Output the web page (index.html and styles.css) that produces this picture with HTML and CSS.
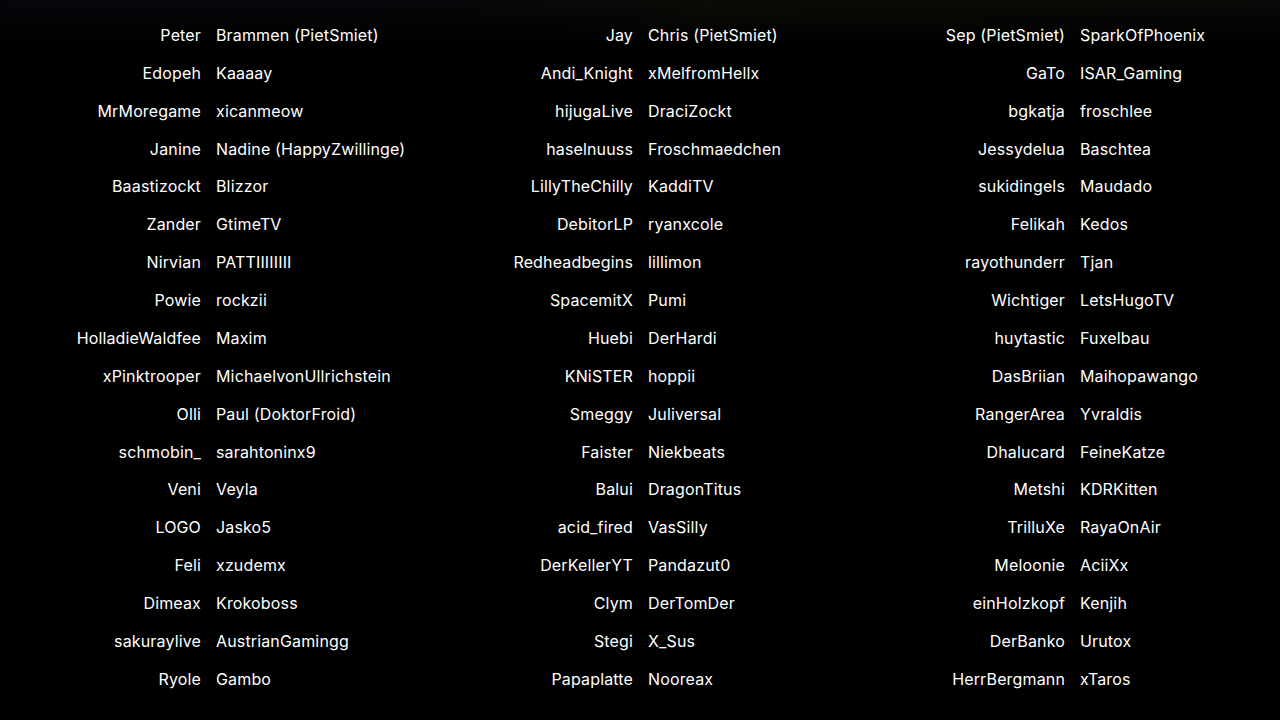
FILE: index.html
```html
<!DOCTYPE html>
<html lang="de">
<head>
<meta charset="utf-8">
<title>Teilnehmer</title>
<link rel="stylesheet" href="styles.css">
</head>
<body>
<main class="credits">
  <div class="group">
    <span class="a">Peter</span><span class="b">Brammen (PietSmiet)</span>
    <span class="a">Edopeh</span><span class="b">Kaaaay</span>
    <span class="a">MrMoregame</span><span class="b">xicanmeow</span>
    <span class="a">Janine</span><span class="b">Nadine (HappyZwillinge)</span>
    <span class="a">Baastizockt</span><span class="b">Blizzor</span>
    <span class="a">Zander</span><span class="b">GtimeTV</span>
    <span class="a">Nirvian</span><span class="b">PATTIIIIIIII</span>
    <span class="a">Powie</span><span class="b">rockzii</span>
    <span class="a">HolladieWaldfee</span><span class="b">Maxim</span>
    <span class="a">xPinktrooper</span><span class="b">MichaelvonUllrichstein</span>
    <span class="a">Olli</span><span class="b">Paul (DoktorFroid)</span>
    <span class="a">schmobin_</span><span class="b">sarahtoninx9</span>
    <span class="a">Veni</span><span class="b">Veyla</span>
    <span class="a">LOGO</span><span class="b">Jasko5</span>
    <span class="a">Feli</span><span class="b">xzudemx</span>
    <span class="a">Dimeax</span><span class="b">Krokoboss</span>
    <span class="a">sakuraylive</span><span class="b">AustrianGamingg</span>
    <span class="a">Ryole</span><span class="b">Gambo</span>
  </div>
  <div class="group">
    <span class="a">Jay</span><span class="b">Chris (PietSmiet)</span>
    <span class="a">Andi_Knight</span><span class="b">xMelfromHellx</span>
    <span class="a">hijugaLive</span><span class="b">DraciZockt</span>
    <span class="a">haselnuuss</span><span class="b">Froschmaedchen</span>
    <span class="a">LillyTheChilly</span><span class="b">KaddiTV</span>
    <span class="a">DebitorLP</span><span class="b">ryanxcole</span>
    <span class="a">Redheadbegins</span><span class="b">lillimon</span>
    <span class="a">SpacemitX</span><span class="b">Pumi</span>
    <span class="a">Huebi</span><span class="b">DerHardi</span>
    <span class="a">KNiSTER</span><span class="b">hoppii</span>
    <span class="a">Smeggy</span><span class="b">Juliversal</span>
    <span class="a">Faister</span><span class="b">Niekbeats</span>
    <span class="a">Balui</span><span class="b">DragonTitus</span>
    <span class="a">acid_fired</span><span class="b">VasSilly</span>
    <span class="a">DerKellerYT</span><span class="b">Pandazut0</span>
    <span class="a">Clym</span><span class="b">DerTomDer</span>
    <span class="a">Stegi</span><span class="b">X_Sus</span>
    <span class="a">Papaplatte</span><span class="b">Nooreax</span>
  </div>
  <div class="group">
    <span class="a">Sep (PietSmiet)</span><span class="b">SparkOfPhoenix</span>
    <span class="a">GaTo</span><span class="b">ISAR_Gaming</span>
    <span class="a">bgkatja</span><span class="b">froschlee</span>
    <span class="a">Jessydelua</span><span class="b">Baschtea</span>
    <span class="a">sukidingels</span><span class="b">Maudado</span>
    <span class="a">Felikah</span><span class="b">Kedos</span>
    <span class="a">rayothunderr</span><span class="b">Tjan</span>
    <span class="a">Wichtiger</span><span class="b">LetsHugoTV</span>
    <span class="a">huytastic</span><span class="b">Fuxelbau</span>
    <span class="a">DasBriian</span><span class="b">Maihopawango</span>
    <span class="a">RangerArea</span><span class="b">Yvraldis</span>
    <span class="a">Dhalucard</span><span class="b">FeineKatze</span>
    <span class="a">Metshi</span><span class="b">KDRKitten</span>
    <span class="a">TrilluXe</span><span class="b">RayaOnAir</span>
    <span class="a">Meloonie</span><span class="b">AciiXx</span>
    <span class="a">einHolzkopf</span><span class="b">Kenjih</span>
    <span class="a">DerBanko</span><span class="b">Urutox</span>
    <span class="a">HerrBergmann</span><span class="b">xTaros</span>
  </div>
</main>
</body>
</html>
```

FILE: styles.css
```css
html, body {
  margin: 0;
  padding: 0;
  height: 100%;
  overflow: hidden;
}

body {
  background-color: #000;
  background-image:
    linear-gradient(180deg, rgba(0,0,0,0) 0px, #000 44px),
    linear-gradient(90deg, #05060a 0%, #06070a 35%, #0c0b07 55%, #0b0a06 75%, #0a0907 100%);
  background-repeat: no-repeat;
  color: #fff;
  font-family: "Inter", "Open Sans", sans-serif;
  font-size: 16px;
  letter-spacing: 0.15px;
}

.credits {
  display: flex;
  gap: 15px;
  padding-top: 16px;
}

.group {
  display: grid;
  grid-template-columns: 201px 201px;
  column-gap: 15px;
  grid-auto-rows: 37.88px;
  align-items: center;
  width: 417px;
}

.a {
  text-align: right;
  white-space: nowrap;
}

.b {
  text-align: left;
  white-space: nowrap;
}
```
